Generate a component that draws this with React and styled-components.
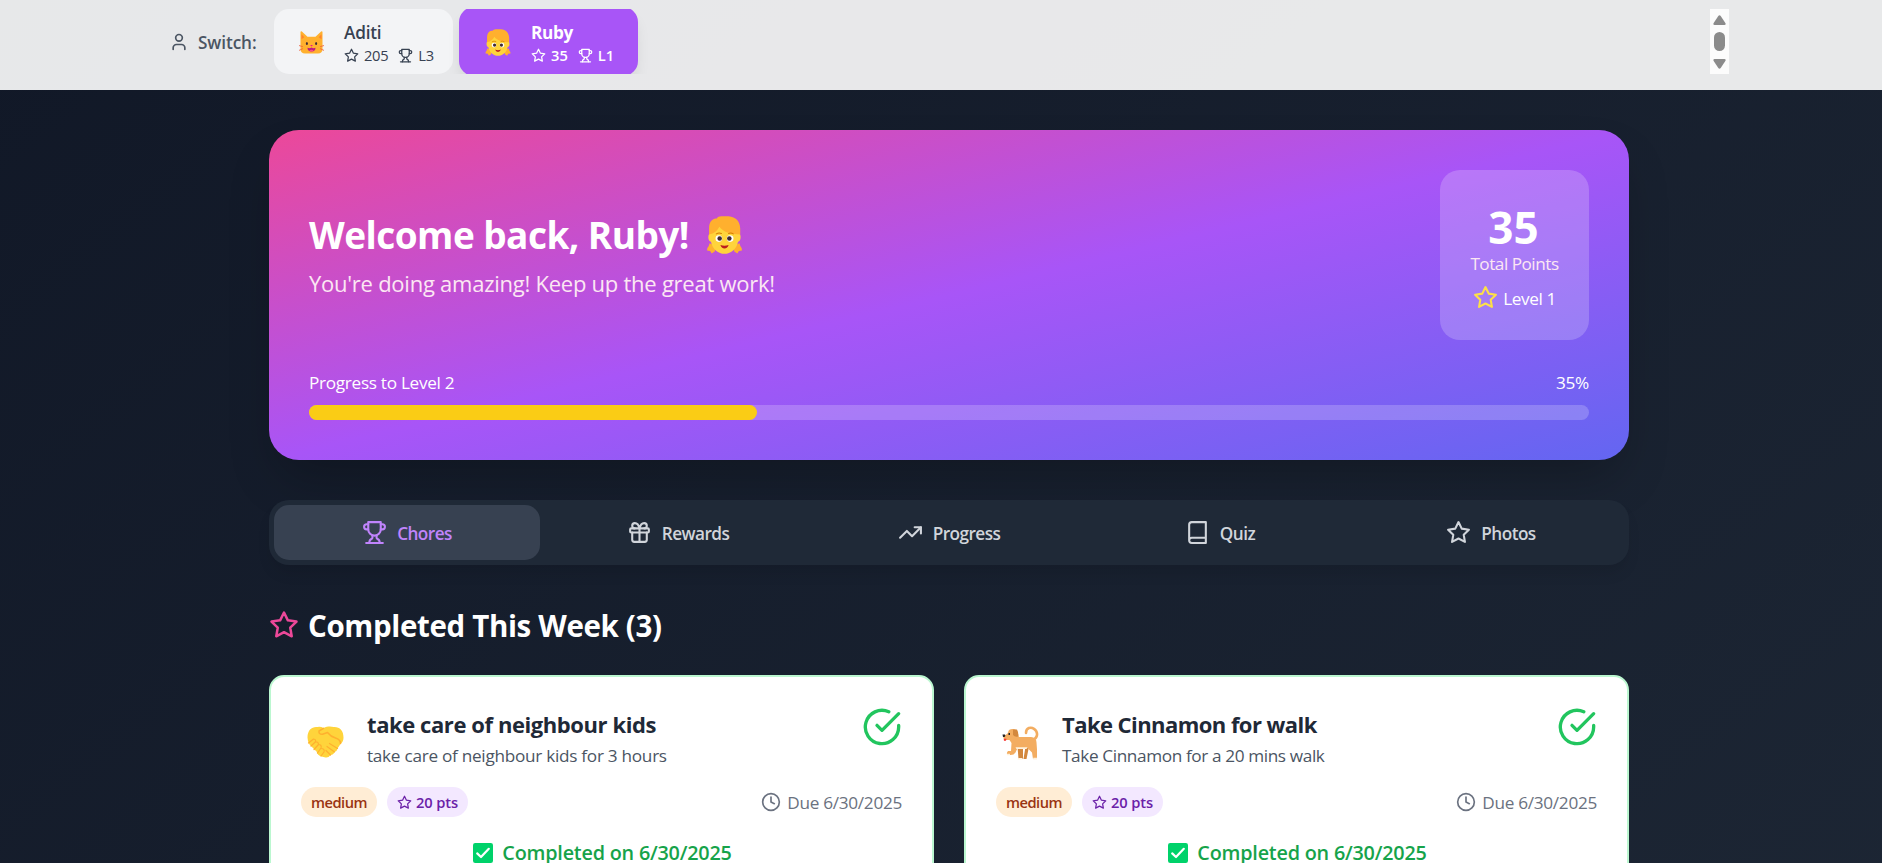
import React from 'react';
import styled, { createGlobalStyle } from 'styled-components';
import { User, Gift, TrendingUp, Clock } from 'lucide-react';

const colors = {
    gray900: '#111827',
    gray800: '#1f2937',
    gray700: '#374151',
    gray600: '#4b5563',
    gray500: '#6b7280',
    gray300: '#d1d5db',
    gray100: '#f3f4f6',
    purple: '#a855f7',
    pink: '#ec4899',
    indigo: '#6366f1',
    yellow: '#facc15',
    green: '#22c55e',
};

const GlobalStyle = createGlobalStyle`
    * {
        box-sizing: border-box;
    }

    html,
    body {
        margin: 0;
        height: 100%;
        overflow: hidden;
        background: ${colors.gray900};
    }

    body {
        font-family: 'Open Sans', 'Noto Sans', sans-serif;
        font-size: 17.2px;
        line-height: 25px;
    }

    h1, h2, h3, p {
        margin: 0;
    }

    svg {
        display: block;
        flex-shrink: 0;
    }
`;

const Page = styled.div`
    width: 1898px;
    height: 100vh;
    overflow: hidden;
    background: linear-gradient(to bottom right, ${colors.gray900}, ${colors.gray800}) 0 0 / 1898px 1500px no-repeat;
`;

/* ---------- header ---------- */

const Header = styled.header`
    height: 90px;
    padding: 9px 169px 16px;
    background: rgba(255, 255, 255, 0.9);
`;

const HeaderInner = styled.div`
    display: flex;
    align-items: center;
    height: 65px;
`;

const SwitchLabel = styled.div`
    display: flex;
    align-items: center;
    gap: 9px;
    width: 105px;
    color: ${colors.gray600};
    font-weight: 560;
    letter-spacing: -0.1px;
    white-space: nowrap;

    span {
        padding-top: 2px;
    }
`;

const KidList = styled.div`
    display: flex;
    flex: 1;
    align-items: center;
    gap: 6px;
    height: 65px;
    overflow: hidden;
`;

const KidButton = styled.button`
    display: flex;
    align-items: center;
    flex-shrink: 0;
    width: 179px;
    height: ${p => (p.$active ? 69 : 65)}px;
    padding: 1px 0 0 ${p => (p.$active ? 20 : 20)}px;
    border: none;
    border-radius: 15px;
    background: ${p => (p.$active ? colors.purple : colors.gray100)};
    box-shadow: ${p => (p.$active ? '0 10px 15px -3px rgba(0, 0, 0, 0.1)' : 'none')};
    color: ${p => (p.$active ? '#fff' : colors.gray700)};
    font: inherit;
    text-align: left;
`;

const KidAvatar = styled.span`
    display: flex;
    justify-content: center;
    width: ${p => (p.$active ? 52 : 50)}px;
    padding-right: 15px;
`;

const KidName = styled.div`
    padding-top: 1px;
    font-weight: ${p => (p.$active ? 680 : 600)};
    letter-spacing: ${p => (p.$active ? -0.3 : -0.2)}px;
    line-height: 25px;
`;

const KidStats = styled.div`
    display: flex;
    align-items: center;
    gap: 5px;
    font-size: 14.7px;
    font-weight: ${p => (p.$active ? 550 : 400)};
    letter-spacing: ${p => (p.$active ? 0 : -0.3)}px;
    line-height: 20px;

    span + svg {
        margin-left: 5px;
    }
`;

const ScrollBar = styled.div`
    display: flex;
    flex-direction: column;
    align-items: center;
    justify-content: space-between;
    width: 19px;
    height: 65px;
    padding: 6px 0 5px;
    background: #fcfcfc;
`;

const ScrollThumb = styled.div`
    width: 11px;
    height: 19px;
    margin-bottom: 2px;
    border-radius: 6px;
    background: #8b8b8b;
`;

/* ---------- hero ---------- */

const Main = styled.main`
    width: 1360px;
    margin: 0 auto;
    padding-top: 40px;
`;

const Hero = styled.section`
    height: 330px;
    padding: 40px;
    border-radius: 30px;
    background: linear-gradient(to bottom right, ${colors.pink}, ${colors.purple}, ${colors.indigo});
    box-shadow: 0 25px 50px -12px rgba(0, 0, 0, 0.25);
    color: #fff;
`;

const HeroTop = styled.div`
    display: flex;
    align-items: center;
    justify-content: space-between;
    height: 170px;
`;

const HeroTitle = styled.h1`
    display: flex;
    align-items: center;
    gap: 17px;
    margin-bottom: 7px;
    padding-top: 2px;
    font-size: 37px;
    font-weight: 700;
    letter-spacing: -0.55px;
    line-height: 48px;
`;

const HeroText = styled.p`
    color: #fce7f3;
    font-size: 22px;
    letter-spacing: -0.25px;
    line-height: 35px;
`;

const PointsBox = styled.div`
    display: flex;
    flex-direction: column;
    align-items: center;
    width: 149px;
    height: 170px;
    padding-top: 33px;
    border-radius: 20px;
    background: rgba(255, 255, 255, 0.2);
`;

const Points = styled.div`
    margin-right: 2px;
    font-size: 44px;
    font-weight: 700;
    line-height: 48px;
`;

const PointsLabel = styled.div`
    color: #fce7f3;
    letter-spacing: -0.5px;
    line-height: 25px;
`;

const Level = styled.div`
    display: flex;
    align-items: center;
    gap: 5px;
    margin-top: 10px;
    font-weight: 500;
    letter-spacing: -0.4px;

    svg {
        color: #fde047;
        margin-top: -3px;
    }
`;

const ProgressLabels = styled.div`
    display: flex;
    justify-content: space-between;
    margin: 30px 0 10px;
    letter-spacing: -0.3px;
`;

const ProgressTrack = styled.div`
    height: 15px;
    border-radius: 8px;
    background: rgba(255, 255, 255, 0.2);
`;

const ProgressFill = styled.div`
    height: 100%;
    border-radius: 8px;
    background: ${colors.yellow};
`;

/* ---------- tabs ---------- */

const Tabs = styled.nav`
    display: grid;
    grid-template-columns: repeat(5, 1fr);
    gap: 5px;
    height: 65px;
    margin-top: 40px;
    padding: 5px;
    border-radius: 20px;
    background: ${colors.gray800};
    box-shadow: 0 10px 15px -3px rgba(0, 0, 0, 0.1);
`;

const Tab = styled.button`
    display: flex;
    align-items: center;
    justify-content: center;
    gap: 10px;
    border: none;
    border-radius: 15px;
    background: ${p => (p.$active ? colors.gray700 : 'transparent')};
    color: ${p => (p.$active ? '#c084fc' : colors.gray300)};
    font: inherit;
    font-weight: 580;
    letter-spacing: -0.55px;

    span {
        padding-top: 2px;
    }
`;

/* ---------- completed chores ---------- */

const SectionTitle = styled.h2`
    display: flex;
    align-items: center;
    gap: 9px;
    margin: 41px 0 29px;
    color: #fff;
    font-size: 29.5px;
    font-weight: 700;
    letter-spacing: -0.35px;
    line-height: 40px;

    svg {
        color: ${colors.pink};
        margin-top: -3px;
    }
`;

const Cards = styled.div`
    display: grid;
    grid-template-columns: 1fr 1fr;
    gap: 30px;
`;

const Card = styled.article`
    padding: 30px;
    border: 2px solid #bbf7d0;
    border-radius: 15px;
    background: #fff;
`;

const CardTop = styled.div`
    display: flex;
    height: 80px;
`;

const CardEmoji = styled.div`
    width: 66px;
    padding: 19px 0 0 6px;
`;

const CardBody = styled.div`
    flex: 1;
`;

const CardTitle = styled.h3`
    color: ${colors.gray800};
    font-size: 22px;
    font-weight: 700;
    letter-spacing: ${p => p.$tracking}px;
    line-height: 34px;
`;

const CardText = styled.p`
    padding-top: 2px;
    color: ${colors.gray600};
    letter-spacing: ${p => p.$tracking}px;
    line-height: 25px;
`;

const CardMeta = styled.div`
    display: flex;
    align-items: center;
    gap: 10px;
    height: 30px;
`;

const Pill = styled.span`
    display: flex;
    align-items: center;
    gap: 4px;
    height: 30px;
    padding: 0 10px;
    border-radius: 15px;
    background: ${p => (p.$points ? '#f3e8ff' : '#ffedd5')};
    color: ${p => (p.$points ? '#6b21a8' : '#9a3412')};
    font-size: 14.7px;
    font-weight: 550;
    letter-spacing: ${p => (p.$points ? -0.15 : -0.5)}px;
`;

const Due = styled.span`
    display: flex;
    align-items: center;
    gap: 6px;
    margin-left: auto;
    color: ${colors.gray500};
    letter-spacing: -0.3px;

    svg {
        margin-top: -1px;
    }
`;

const Done = styled.p`
    display: flex;
    align-items: center;
    justify-content: center;
    gap: 9px;
    margin-top: 20px;
    padding-left: 2px;
    color: #16a34a;
    font-size: 19.8px;
    font-weight: 570;
    letter-spacing: -0.2px;
    line-height: 32px;
`;

const CheckWrap = styled.div`
    color: ${colors.green};
`;

/* ---------- icons ---------- */

const Icon = ({ size, children }) => (
    <svg
        width={size}
        height={size}
        viewBox="0 0 24 24"
        fill="none"
        stroke="currentColor"
        strokeWidth="2"
        strokeLinecap="round"
        strokeLinejoin="round"
    >
        {children}
    </svg>
);

const Star = ({ size }) => (
    <Icon size={size}>
        <polygon points="12 2 15.09 8.26 22 9.27 17 14.14 18.18 21.02 12 17.77 5.82 21.02 7 14.14 2 9.27 8.91 8.26 12 2" />
    </Icon>
);

const Trophy = ({ size }) => (
    <Icon size={size}>
        <path d="M6 9H4.5a2.5 2.5 0 0 1 0-5H6" />
        <path d="M18 9h1.5a2.5 2.5 0 0 0 0-5H18" />
        <path d="M4 22h16" />
        <path d="M10 14.66V17c0 .55-.47.98-.97 1.21C7.85 18.75 7 20.24 7 22" />
        <path d="M14 14.66V17c0 .55.47.98.97 1.21C16.15 18.75 17 20.24 17 22" />
        <path d="M18 2H6v7a6 6 0 0 0 12 0V2Z" />
    </Icon>
);

const Book = ({ size }) => (
    <Icon size={size}>
        <path d="M4 19.5v-15A2.5 2.5 0 0 1 6.5 2H20v20H6.5a2.5 2.5 0 0 1 0-5H20" />
    </Icon>
);

const CheckCircle = ({ size }) => (
    <Icon size={size}>
        <path d="M22 11.08V12a10 10 0 1 1-5.93-9.14" />
        <path d="m9 11 3 3L22 4" />
    </Icon>
);

const GirlEmoji = ({ width, height }) => (
    <svg width={width} height={height} viewBox="7.500 8 35 37">
        <path fill="#ffb02e" d="M10.5 34.500 16.500 37.500 15.500 42.500 12.500 44.500 11 42 8 41.500Q7.500 39.500 9.500 37.500ZM39.500 34.500 33.500 37.500 34.500 42.500 37.500 44.500 39 42 42 41.500Q42.500 39.500 40.500 37.500Z" />
        <path fill="#ffd43b" d="M11.500 24.500C8.500 25 8.500 32.500 11.800 33C13.500 40.500 19 44.800 25 44.800S36.500 40.500 38.200 33C41.500 32.500 41.500 25 38.500 24.500L30 16H20Z" />
        <path fill="#ffb02e" d="M10 26V20C10 13 13.500 10.500 17.500 10.500Q18.500 8.200 22 8.200H29C36 8.800 40 13 40.300 20V26C32 26 24 24 20 18.500C18 22 15 25.500 10 26Z" />
        <path fill="none" stroke="#d67d00" strokeWidth="1" strokeLinecap="round" d="M17 25.400q2.500-1.500 5-.4M29 25q2.500-1 4.500.4" />
        <circle cx="19.500" cy="30" r="3.200" fill="#fff" />
        <circle cx="30.500" cy="30" r="3.200" fill="#fff" />
        <circle cx="20.300" cy="30" r="2.200" fill="#402a32" />
        <circle cx="29.700" cy="30" r="2.200" fill="#402a32" />
        <path fill="#bb1d1d" d="M21 36.200Q25 37.800 29 36.200Q28 39.600 25 39.600T21 36.200Z" />
    </svg>
);

const CatEmoji = () => (
    <svg width="25" height="23" viewBox="9.500 13.200 25 23">
        <path fill="#ffb02e" d="M11 14.200Q11.300 13 12.400 13.800L18 19H26L31.600 13.800Q32.700 13 33 14.200V31Q33 35.700 28.500 35.700H15.500Q11 35.700 11 31Z" />
        <path fill="#ff822d" d="M12 16.500 14.800 19.500 12 21.500ZM32 16.500 29.200 19.500 32 21.500Z" />
        <path fill="none" stroke="#ed5a3a" strokeWidth=".8" strokeLinecap="round" d="M9.800 27.800 13 28.800M9.800 32.500 13 31M34.200 27.800 31 28.800M34.200 32.500 31 31" />
        <ellipse cx="17.400" cy="25.700" rx="1" ry="1.600" fill="#402a32" />
        <ellipse cx="26.600" cy="25.700" rx="1" ry="1.600" fill="#402a32" />
        <path fill="#f70a8d" d="M20.700 27.300H23.300L22 28.800Z" />
        <path fill="#bb1d80" d="M18 30Q20 31 22 29.800Q24 31 26 30Q26 33.800 22 33.800T18 30Z" />
        <path fill="#ff4c86" d="M19.800 32.700Q22 31.200 24.200 32.700Q22 34.500 19.800 32.700Z" />
    </svg>
);

const HandshakeEmoji = () => (
    <svg width="37" height="33" viewBox="6.500 8.500 37 33">
        <path fill="#ffd43b" d="M7 20C7 12 12 8.700 17 9.500Q20 8.700 23 10.600C27 8.500 31 9 33 9.500C39 9 43 13 43 20Q43 24 40 26.500L37 31Q36.500 34 34 34.500Q33 37.500 30 37.500Q28 40.500 25 40L21 39Q17 38 16 34L9 27Q7 24 7 20Z" />
        <g fill="none" stroke="#ffb02e" strokeLinecap="round" strokeLinejoin="round">
            <path strokeWidth="1.500" d="M23 10.800 18.500 13.500Q18 17 22 16.800L27 15Q30 19 35 20.500T40 26" />
            <path strokeWidth="1.200" d="M8 25.500 13 21.500Q16 22 14.800 24.500L10.500 28.500M14.800 24.500Q18 24 18 27L13.500 32M18 27Q21.500 27 20.500 30.500L17 35.500M20.500 31Q24.500 31 23.500 34.500L20.500 38.500" />
            <path strokeWidth="1.200" d="M29 26 37 31M26.500 29 34 34.500M25.500 33 30 37.500" />
        </g>
    </svg>
);

const DogEmoji = () => (
    <svg width="38" height="35" viewBox="7 6.500 38 35">
        <path fill="none" stroke="#f3ad61" strokeWidth="2.600" strokeLinecap="round" d="M31 13.500C31 8 36 7.300 39 9.300C43 12 43 17 39.500 19.500Q38 20.500 35 20" />
        <path fill="#d3883e" d="M22.500 27H28V39.500H23.500ZM30.500 27H34L31.500 39.500H28.500Z" />
        <path fill="#f3ad61" d="M14 10.500Q18 8.500 22 11L24 17.500H36Q41.500 18 41.500 23L42 30V39.500H38L37 33L32.500 28.500H22.500L20.500 33Q19 35.500 15.500 35.500H12.500Q11 33.500 13 31.500H16L16.500 23.500 14.500 20.500H10Q8 19.500 8.500 17L12.500 14Z" />
        <path fill="#d3883e" d="M18 10H22Q24 14 23 17Q20 18 18 15.500Z" />
        <path fill="#fff2dc" d="M20.500 27.800H32.500L31.500 29.500H21.500ZM11.800 34.300H15V35.800H12ZM38.300 38.300H42V40H38ZM23.300 38.500H27.500V40H22.500Z" />
        <path fill="#212121" d="M7.500 15H10Q11 16.500 9.500 17.500H8ZM13.500 13.500H15V15.500H13.500Z" />
        <path fill="#f8312f" d="M8.800 19.300H11.300V20.500Q10 22.300 8.800 20.800Z" />
    </svg>
);

const CheckEmoji = () => (
    <svg width="20" height="20" viewBox="0 0 20 20">
        <rect width="20" height="20" rx="2.200" fill="#00d26a" />
        <path d="M4.200 10.400 8 14 15.800 5.800" fill="none" stroke="#fff" strokeWidth="2.200" strokeLinecap="round" strokeLinejoin="round" />
    </svg>
);

const ArrowUp = () => (
    <svg width="13" height="10" viewBox="0 0 13 10">
        <path d="M5.300 1Q6.500-.5 7.700 1L12.500 8.300Q13 10 11.500 10H1.500Q0 10 .5 8.300Z" fill="#8b8b8b" />
    </svg>
);

const ArrowDown = () => (
    <svg width="13" height="10" viewBox="0 0 13 10">
        <path d="M5.300 9Q6.500 10.500 7.700 9L12.500 1.700Q13 0 11.500 0H1.500Q0 0 .5 1.700Z" fill="#8b8b8b" />
    </svg>
);

/* ---------- data ---------- */

const kids = [
    { name: 'Aditi', points: 205, level: 3, avatar: <CatEmoji /> },
    { name: 'Ruby', points: 35, level: 1, avatar: <GirlEmoji width={26} height={27} />, active: true },
];

const tabs = [
    { label: 'Chores', icon: <Trophy size={25} />, active: true },
    { label: 'Rewards', icon: <Gift size={25} /> },
    { label: 'Progress', icon: <TrendingUp size={25} /> },
    { label: 'Quiz', icon: <Book size={25} /> },
    { label: 'Photos', icon: <Star size={25} /> },
];

const chores = [
    {
        title: 'take care of neighbour kids',
        text: 'take care of neighbour kids for 3 hours',
        emoji: <HandshakeEmoji />,
        titleTracking: -0.42,
        textTracking: -0.28,
    },
    {
        title: 'Take Cinnamon for walk',
        text: 'Take Cinnamon for a 20 mins walk',
        emoji: <DogEmoji />,
        titleTracking: -0.56,
        textTracking: -0.38,
    },
];

const progress = 35;

const App = () => {
    return (
        <Page>
            <GlobalStyle />

            <Header>
                <HeaderInner>
                    <SwitchLabel>
                        <User size={20} />
                        <span>Switch:</span>
                    </SwitchLabel>
                    <KidList>
                        {kids.map(kid => (
                            <KidButton key={kid.name} $active={kid.active}>
                                <KidAvatar $active={kid.active}>{kid.avatar}</KidAvatar>
                                <div>
                                    <KidName $active={kid.active}>{kid.name}</KidName>
                                    <KidStats $active={kid.active}>
                                        <Star size={15} />
                                        <span>{kid.points}</span>
                                        <Trophy size={15} />
                                        <span>L{kid.level}</span>
                                    </KidStats>
                                </div>
                            </KidButton>
                        ))}
                    </KidList>
                    <ScrollBar>
                        <ArrowUp />
                        <ScrollThumb />
                        <ArrowDown />
                    </ScrollBar>
                </HeaderInner>
            </Header>

            <Main>
                <Hero>
                    <HeroTop>
                        <div>
                            <HeroTitle>
                                Welcome back, Ruby! <GirlEmoji width={37} height={38} />
                            </HeroTitle>
                            <HeroText>You're doing amazing! Keep up the great work!</HeroText>
                        </div>
                        <PointsBox>
                            <Points>35</Points>
                            <PointsLabel>Total Points</PointsLabel>
                            <Level>
                                <Star size={25} />
                                Level 1
                            </Level>
                        </PointsBox>
                    </HeroTop>
                    <ProgressLabels>
                        <span>Progress to Level 2</span>
                        <span>{progress}%</span>
                    </ProgressLabels>
                    <ProgressTrack>
                        <ProgressFill style={{ width: `${progress}%` }} />
                    </ProgressTrack>
                </Hero>

                <Tabs>
                    {tabs.map(tab => (
                        <Tab key={tab.label} $active={tab.active}>
                            {tab.icon}
                            <span>{tab.label}</span>
                        </Tab>
                    ))}
                </Tabs>

                <SectionTitle>
                    <Star size={30} />
                    Completed This Week (3)
                </SectionTitle>

                <Cards>
                    {chores.map(chore => (
                        <Card key={chore.title}>
                            <CardTop>
                                <CardEmoji>{chore.emoji}</CardEmoji>
                                <CardBody>
                                    <CardTitle $tracking={chore.titleTracking}>{chore.title}</CardTitle>
                                    <CardText $tracking={chore.textTracking}>{chore.text}</CardText>
                                </CardBody>
                                <CheckWrap>
                                    <CheckCircle size={40} />
                                </CheckWrap>
                            </CardTop>
                            <CardMeta>
                                <Pill>medium</Pill>
                                <Pill $points>
                                    <Star size={15} />
                                    20 pts
                                </Pill>
                                <Due>
                                    <Clock size={20} />
                                    Due 6/30/2025
                                </Due>
                            </CardMeta>
                            <Done>
                                <CheckEmoji />
                                Completed on 6/30/2025
                            </Done>
                        </Card>
                    ))}
                </Cards>
            </Main>
        </Page>
    );
};

export default App;
